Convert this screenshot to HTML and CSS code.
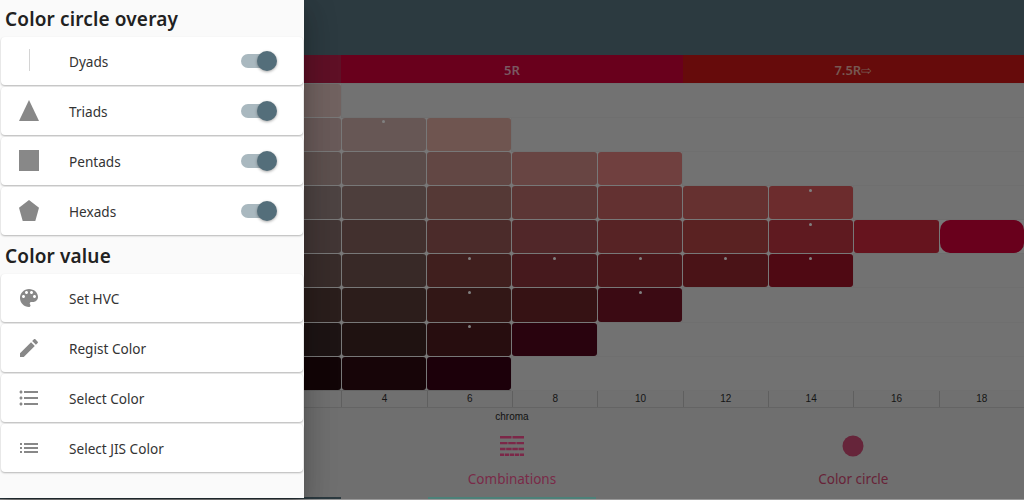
FILE: index.html
```html
<!DOCTYPE html>
<html lang="en">
<head>
<meta charset="utf-8">
<title>Color circle</title>
<link rel="stylesheet" href="styles.css">
</head>
<body>
<div class="page">
  <main class="main">
    <header class="appbar"></header>
    <div class="hues">
      <div class="hue hue-a"><span class="arrow">⇦</span>2.5R</div>
      <div class="hue hue-b">5R</div>
      <div class="hue hue-c">7.5R<span class="arrow">⇨</span></div>
    </div>
    <div class="chart">
      <i class="e s3"></i><i class="f" style="background:#716260"></i><i class="e s8"></i>
      <i class="e s3"></i><i class="f" style="background:#695a59"></i><i class="f" style="background:#675755"><b class="dot"></b></i><i class="f" style="background:#6f5550"></i><i class="e s6"></i>
      <i class="e s3"></i><i class="f" style="background:#5d504e"></i><i class="f" style="background:#5b4c4a"></i><i class="f" style="background:#624744"></i><i class="f" style="background:#684543"></i><i class="f" style="background:#70403f"></i><i class="e s4"></i>
      <i class="e s3"></i><i class="f" style="background:#4d4342"></i><i class="f" style="background:#4d3e3c"></i><i class="f" style="background:#553936"></i><i class="f" style="background:#5c3635"></i><i class="f" style="background:#633131"></i><i class="f" style="background:#663130"></i><i class="f" style="background:#6c2c2d"><b class="dot"></b></i><i class="e s2"></i>
      <i class="e s3"></i><i class="f" style="background:#423635"></i><i class="f" style="background:#42302e"></i><i class="f" style="background:#4b2b2a"></i><i class="f" style="background:#512729"></i><i class="f" style="background:#572325"></i><i class="f" style="background:#5a2222"></i><i class="f" style="background:#5f1a20"><b class="dot"></b></i><i class="f" style="background:#66141e"></i><i class="f max" style="background:#69001c"></i>
      <i class="e s3"></i><i class="f" style="background:#382c2a"></i><i class="f" style="background:#382927"></i><i class="f" style="background:#401f1e"><b class="dot"></b></i><i class="f" style="background:#46191d"><b class="dot"></b></i><i class="f" style="background:#4a161a"><b class="dot"></b></i><i class="f" style="background:#4a1317"><b class="dot"></b></i><i class="f" style="background:#4f0913"><b class="dot"></b></i><i class="e s2"></i>
      <i class="e s3"></i><i class="f" style="background:#2a1e1c"></i><i class="f" style="background:#2c1d1b"></i><i class="f" style="background:#321716"><b class="dot"></b></i><i class="f" style="background:#361214"></i><i class="f" style="background:#3b0a13"><b class="dot"></b></i><i class="e s4"></i>
      <i class="e s3"></i><i class="f" style="background:#1d1414"></i><i class="f" style="background:#1f1211"></i><i class="f" style="background:#270d0f"><b class="dot"></b></i><i class="f" style="background:#29030e"></i><i class="e s5"></i>
      <i class="e s3"></i><i class="f" style="background:#120507"></i><i class="f" style="background:#170508"></i><i class="f" style="background:#1c000a"></i><i class="e s6"></i>
    </div>
    <div class="axis">
      <span></span><span></span><span></span><span>2</span><span>4</span><span>6</span><span>8</span><span>10</span><span>12</span><span>14</span><span>16</span><span>18</span>
    </div>
    <div class="axis-title">chroma</div>
    <nav class="tabs">
      <div class="tab"></div>
      <div class="tab tab-comb">
        <svg class="tab-icon" viewBox="0 0 24 20" aria-hidden="true">
          <path d="M0 0h11.500v2.400H0zM12.500 0H24v2.400H12.500zM0 5.900h7.500v2.400H0zM8.250 5.900h7.500v2.400h-7.500zM16.500 5.900H24v2.400h-7.500zM0 11.800h5.500v2.400H0zM6.170 11.800h5.500v2.400h-5.500zM12.330 11.800h5.500v2.400h-5.500zM18.500 11.800H24v2.400h-5.500zM0 17.600h4.200V20H0zM4.950 17.600h4.200V20h-4.200zM9.900 17.600h4.200V20H9.900zM14.850 17.600h4.200V20h-4.200zM19.800 17.600H24V20h-4.200z"/>
        </svg>
        <span>Combinations</span>
      </div>
      <div class="tab tab-circle">
        <svg class="tab-icon" viewBox="0 0 24 24" aria-hidden="true"><circle cx="12" cy="12" r="10.500"/></svg>
        <span>Color circle</span>
      </div>
    </nav>
    <div class="strip"><u class="seg-a"></u><u class="seg-gap"></u><u class="seg-b"></u></div>
  </main>

  <aside class="drawer">
    <h2 class="title">Color circle overay</h2>
    <div class="card">
      <svg class="icon" viewBox="0 0 24 24" aria-hidden="true"><rect class="dyad" x="12" y="0" width="1" height="22"/></svg>
      <span class="label">Dyads</span>
      <span class="switch"></span>
    </div>
    <div class="card">
      <svg class="icon" viewBox="0 0 24 24" aria-hidden="true"><path d="M12 1 22 22H2z"/></svg>
      <span class="label">Triads</span>
      <span class="switch"></span>
    </div>
    <div class="card">
      <svg class="icon" viewBox="0 0 24 24" aria-hidden="true"><path d="M2 1h20v21H2z"/></svg>
      <span class="label">Pentads</span>
      <span class="switch"></span>
    </div>
    <div class="card">
      <svg class="icon" viewBox="0 0 24 24" aria-hidden="true"><path d="M12 1 22 8.800 18.300 22H5.700L2 8.800z"/></svg>
      <span class="label">Hexads</span>
      <span class="switch"></span>
    </div>
    <h2 class="title">Color value</h2>
    <div class="card">
      <svg class="icon" viewBox="0 0 24 24" aria-hidden="true"><path d="M12 3c-4.970 0-9 4.030-9 9s4.030 9 9 9c.83 0 1.500-.67 1.500-1.500 0-.39-.15-.74-.39-1.010-.23-.26-.38-.61-.38-.99 0-.83.67-1.500 1.500-1.500H16c2.760 0 5-2.240 5-5 0-4.420-4.030-8-9-8zm-5.500 9c-.83 0-1.500-.67-1.500-1.500S5.670 9 6.500 9 8 9.670 8 10.500 7.330 12 6.500 12zm3-4C8.670 8 8 7.330 8 6.500S8.670 5 9.500 5s1.500.67 1.500 1.500S10.330 8 9.500 8zm5 0c-.83 0-1.500-.67-1.500-1.500S13.670 5 14.500 5s1.500.67 1.500 1.500S15.330 8 14.500 8zm3 4c-.83 0-1.500-.67-1.500-1.500S16.670 9 17.500 9s1.500.67 1.500 1.500-.67 1.500-1.500 1.500z"/></svg>
      <span class="label">Set HVC</span>
    </div>
    <div class="card">
      <svg class="icon" viewBox="0 0 24 24" aria-hidden="true"><path d="M3 17.250V21h3.750L17.810 9.940l-3.750-3.750L3 17.250zM20.710 7.040c.39-.39.39-1.020 0-1.410l-2.340-2.340c-.39-.39-1.020-.39-1.410 0l-1.830 1.830 3.750 3.750 1.830-1.830z"/></svg>
      <span class="label">Regist Color</span>
    </div>
    <div class="card">
      <svg class="icon" viewBox="0 0 24 24" aria-hidden="true"><path d="M4 10.500c-.83 0-1.500.67-1.500 1.500s.67 1.500 1.500 1.500 1.500-.67 1.500-1.500-.67-1.500-1.500-1.500zm0-6c-.83 0-1.500.67-1.500 1.500S3.170 7.500 4 7.500 5.500 6.830 5.500 6 4.830 4.500 4 4.500zm0 12c-.83 0-1.500.68-1.500 1.500s.68 1.500 1.500 1.500 1.500-.68 1.500-1.500-.67-1.500-1.500-1.500zM7 19h14v-2H7v2zm0-6h14v-2H7v2zm0-8v2h14V5H7z"/></svg>
      <span class="label">Select Color</span>
    </div>
    <div class="card">
      <svg class="icon" viewBox="0 0 24 24" aria-hidden="true"><path d="M3 13h2v-2H3v2zm0 4h2v-2H3v2zm0-8h2V7H3v2zm4 4h14v-2H7v2zm0 4h14v-2H7v2zM7 7v2h14V7H7z"/></svg>
      <span class="label">Select JIS Color</span>
    </div>
  </aside>
</div>
</body>
</html>
```

FILE: styles.css
```css
* { box-sizing: border-box; }

html, body {
  margin: 0;
  height: 100%;
  overflow: hidden;
}

body {
  font-family: "Noto Sans", sans-serif;
  background: #6f6f6f;
}

.page {
  position: relative;
  width: 1024px;
  height: 500px;
  overflow: hidden;
}

.main {
  display: flex;
  flex-direction: column;
  height: 500px;
  background: #6f6f6f;
}

.appbar {
  height: 55px;
  background: #2c3a40;
}

.hues {
  display: grid;
  grid-template-columns: repeat(3, 1fr);
  height: 28px;
}

.hue {
  display: flex;
  align-items: center;
  justify-content: center;
  font-size: 13px;
  font-weight: 600;
  padding-top: 2px;
}

.arrow { font-weight: 400; }

.hue-a { background: #5f1026; color: #765862; }
.hue-b { background: #69001c; color: #7a5862; }
.hue-c { background: #660b0b; color: #775852; }

.chart {
  display: grid;
  grid-template-columns: repeat(12, 1fr);
  grid-auto-rows: 33.100px;
  gap: 1px;
  height: 306.100px;
  margin-top: .9px;
  background: #787878;
}

.chart i {
  display: block;
  position: relative;
  border-radius: 3px;
}

.chart .e {
  background: #727272;
  box-shadow: 0 0 0 1px #6f6f6f;
  border-radius: 0;
}

.s2 { grid-column: span 2; }
.s3 { grid-column: span 3; }
.s4 { grid-column: span 4; }
.s5 { grid-column: span 5; }
.s6 { grid-column: span 6; }
.s8 { grid-column: span 8; }

.chart .max { border-radius: 10px; }

.dot {
  position: absolute;
  top: 2.500px;
  left: 50%;
  width: 3px;
  height: 3px;
  margin-left: -1.500px;
  border-radius: 50%;
  background: #808080;
}

.axis {
  display: grid;
  grid-template-columns: repeat(12, 1fr);
  height: 18px;
  background: #707070;
  border-top: 1px solid #646464;
  border-bottom: 1px solid #646464;
}

.axis span {
  display: flex;
  align-items: center;
  justify-content: center;
  border-left: 1px solid #5f5f5f;
  font-family: "Liberation Sans", Arial, sans-serif;
  font-size: 10px;
  color: #151515;
}

.axis-title {
  height: 17px;
  display: flex;
  align-items: center;
  justify-content: center;
  font-family: "Liberation Sans", Arial, sans-serif;
  font-size: 10px;
  color: #111;
}

.tabs {
  display: grid;
  grid-template-columns: repeat(3, 1fr);
  flex: 1;
}

.tab {
  display: flex;
  flex-direction: column;
  align-items: center;
  padding-top: 9px;
  gap: 12px;
  font-size: 13.500px;
  line-height: 18px;
}

.tab-icon {
  display: block;
  width: 24px;
  height: 24px;
}

.tab-comb { color: #7a2a48; }
.tab-comb .tab-icon { fill: #7c2748; height: 20px; margin: 2px 0; }
.tab-circle { color: #682338; }
.tab-circle .tab-icon { fill: #66253a; }

.strip {
  display: grid;
  grid-template-columns: 341.300px 87px 168px;
  height: 3px;
  border-bottom: 1px solid #999;
}

.seg-a { background: #2c3a40; }
.seg-b { background: #4c8078; }

.drawer {
  position: absolute;
  top: 0;
  left: 0;
  width: 304px;
  height: 498px;
  padding: 0 1px;
  background: #fafafa;
  box-shadow: 0 8px 10px -5px rgba(0, 0, 0, .2), 0 16px 24px 2px rgba(0, 0, 0, .14), 0 6px 30px 5px rgba(0, 0, 0, .12);
}

.title {
  margin: 0;
  padding: 6px 0 0 4px;
  height: 37px;
  font-size: 19px;
  font-weight: 600;
  letter-spacing: .15px;
  line-height: 26px;
  color: #212121;
}

.card {
  display: flex;
  align-items: center;
  height: 48px;
  margin: 0 0 2px;
  padding-left: 16px;
  background: #fff;
  border-radius: 4px;
  box-shadow: 0 1px 2px rgba(0, 0, 0, .28);
}

.icon {
  flex: none;
  width: 24px;
  height: 24px;
  fill: #888;
}

.icon .dyad { fill: #d4d4d4; }

.label {
  margin-left: 28px;
  padding-top: 1px;
  font-size: 13.600px;
  color: #333;
}

.switch {
  position: relative;
  width: 34px;
  height: 14px;
  margin-left: auto;
  margin-right: 28px;
  border-radius: 7px;
  background: #a9b8bf;
}

.switch::after {
  content: "";
  position: absolute;
  top: -3px;
  right: -2px;
  width: 20px;
  height: 20px;
  border-radius: 50%;
  background: #546e7a;
  box-shadow: 0 1px 3px rgba(0, 0, 0, .35);
}
```
